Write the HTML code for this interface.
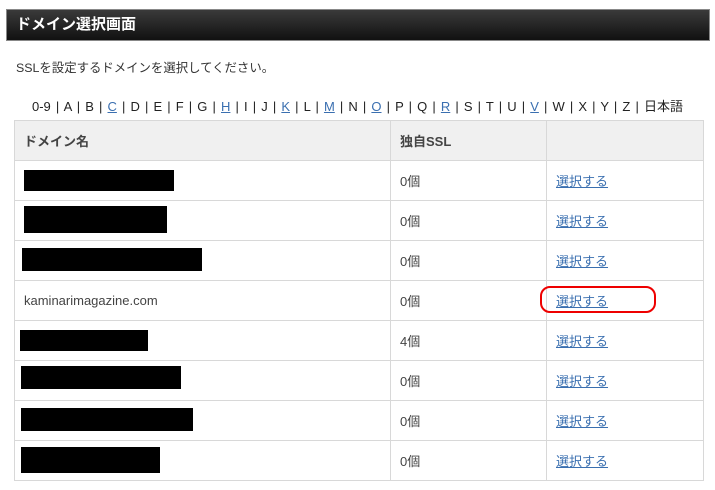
<!DOCTYPE html>
<html><head><meta charset="utf-8"><style>
body{margin:0;width:715px;height:490px;background:#fff;font-family:"Liberation Sans","Noto Sans CJK JP",sans-serif;position:relative;overflow:hidden;color:#333}
.hd{position:absolute;left:6px;top:9px;width:704px;height:32px;background:linear-gradient(#3a3a3a,#111);box-sizing:border-box;border:1px solid #888;color:#fff;font-weight:bold;font-size:15px;line-height:30px;padding-left:9px}
.p{position:absolute;left:16px;top:58px;font-size:12.4px}
.al{position:absolute;left:32px;top:96px;font-size:13px;color:#222;white-space:nowrap;word-spacing:1.5px}
.al a{color:#3a6fb0;text-decoration:underline}
table{position:absolute;left:14px;top:120px;border-collapse:collapse;font-size:13px;table-layout:fixed;width:689px}
td{border:1px solid #d8d8d8;height:39px;padding:0 0 0 9px;color:#444;overflow:hidden;white-space:nowrap}
tr.h td{background:#f0f0f0;font-weight:bold;height:39px}
td a{color:#3a6fb0;text-decoration:underline}
.b{position:absolute;background:#000}
.r{position:absolute;left:540px;top:286px;width:116px;height:27px;border:2.5px solid #e00;border-radius:10px;box-sizing:border-box}
</style></head><body>
<div class="hd">ドメイン選択画面</div>
<div class="p">SSLを設定するドメインを選択してください。</div>
<div class="al">0-9 | A | B | <a>C</a> | D | E | F | G | <a>H</a> | I | J | <a>K</a> | L | <a>M</a> | N | <a>O</a> | P | Q | <a>R</a> | S | T | U | <a>V</a> | W | X | Y | Z | 日本語</div>
<table>
<colgroup><col style="width:376px"><col style="width:156px"><col style="width:157px"></colgroup>
<tr class="h"><td>ドメイン名</td><td>独自SSL</td><td></td></tr>
<tr><td></td><td>0個</td><td><a>選択する</a></td></tr>
<tr><td></td><td>0個</td><td><a>選択する</a></td></tr>
<tr><td></td><td>0個</td><td><a>選択する</a></td></tr>
<tr><td>kaminarimagazine.com</td><td>0個</td><td><a>選択する</a></td></tr>
<tr><td></td><td>4個</td><td><a>選択する</a></td></tr>
<tr><td></td><td>0個</td><td><a>選択する</a></td></tr>
<tr><td></td><td>0個</td><td><a>選択する</a></td></tr>
<tr><td></td><td>0個</td><td><a>選択する</a></td></tr>
</table>
<div class="b" style="left:24px;top:170px;width:150px;height:21px"></div>
<div class="b" style="left:24px;top:206px;width:143px;height:27px"></div>
<div class="b" style="left:22px;top:248px;width:180px;height:23px"></div>
<div class="b" style="left:20px;top:330px;width:128px;height:21px"></div>
<div class="b" style="left:21px;top:366px;width:160px;height:23px"></div>
<div class="b" style="left:21px;top:408px;width:172px;height:23px"></div>
<div class="b" style="left:21px;top:447px;width:139px;height:26px"></div>
<div class="r"></div>
</body></html>
